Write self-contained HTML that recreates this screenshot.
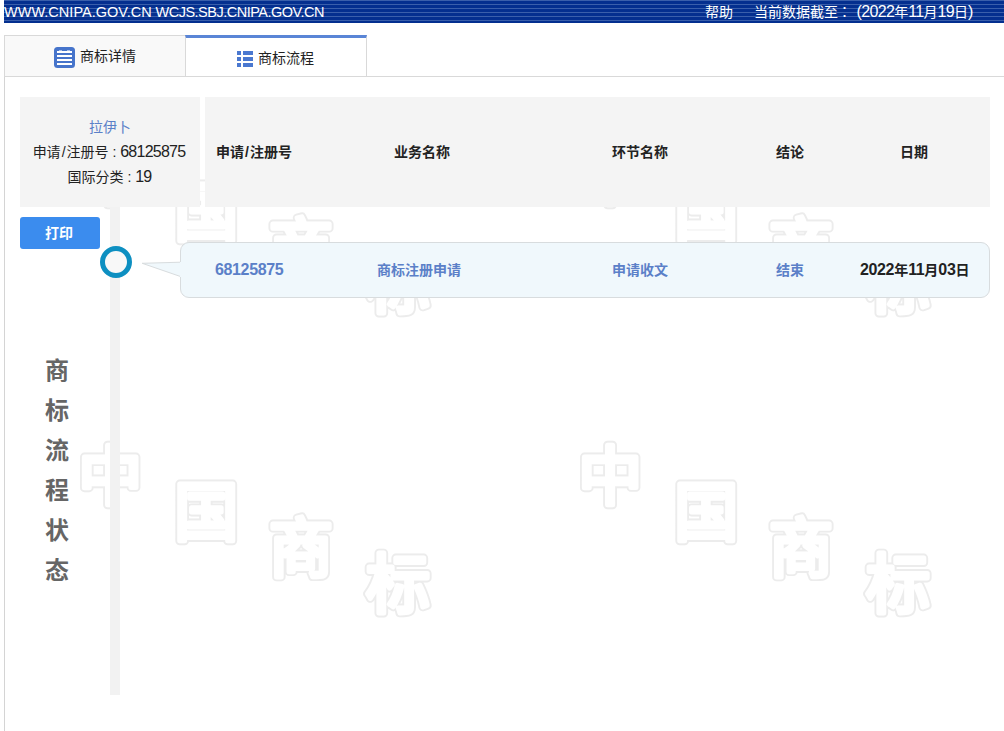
<!DOCTYPE html>
<html lang="zh-CN">
<head>
<meta charset="utf-8">
<title>商标流程</title>
<style>
html,body{margin:0;padding:0;background:#fff;}
body{width:1004px;height:731px;position:relative;overflow:hidden;
  font-family:"Liberation Sans","Noto Sans CJK SC",sans-serif;font-size:14px;color:#222;}
.abs{position:absolute;}
.n{font-size:16px;letter-spacing:-0.36px;}
.m{font-size:16px;letter-spacing:-0.75px;}
.sl{margin:0 1px;}
#hdr .m{letter-spacing:-.65px;}
#hdr{left:4px;top:0;width:1000px;height:23px;
  background:repeating-linear-gradient(to bottom,#3a5fab 0,#3a5fab 1px,#042f8f 1px,#042f8f 4px);}
#hdr span{position:absolute;top:0;height:23px;line-height:23px;color:#fff;font-size:14px;white-space:nowrap;}
#wm{left:5px;top:77px;width:999px;height:654px;}
#lborder{left:4px;top:35px;width:1px;height:696px;background:#d4d4d4;}
#hline{left:4px;top:76px;width:1000px;height:1px;background:#d9d9d9;}
#tab1{left:4px;top:35px;width:181px;height:41px;background:#f9f9f9;border:1px solid #d9d9d9;border-bottom:none;box-sizing:content-box;}
#tab2{left:185px;top:35px;width:180px;height:38px;background:#fff;border-top:3px solid #5a85d6;border-left:1px solid #d9d9d9;border-right:1px solid #d9d9d9;}
.tabtxt{position:absolute;white-space:nowrap;font-size:14px;line-height:20px;color:#222;}
#info{left:20px;top:97px;width:180px;height:110px;background:#f4f4f4;}
#info div{position:absolute;left:0;width:180px;text-align:center;white-space:nowrap;line-height:20px;font-size:14px;}
#thead{left:205px;top:97px;width:785px;height:110px;background:#f4f4f4;}
.th{position:absolute;top:142px;line-height:20px;font-weight:bold;white-space:nowrap;font-size:14px;color:#222;}
#print{left:20px;top:217px;width:78px;padding-right:2px;height:32px;background:#3b8cee;border-radius:3px;color:#fff;font-weight:bold;text-align:center;line-height:32px;font-size:14px;}
#vline{left:110px;top:207px;width:10px;height:488px;background:#f2f2f2;}
#dot{left:100px;top:246px;width:22px;height:22px;border:5px solid #0d8fc1;border-radius:50%;background:#f8f8f8;}
#bubble{left:180px;top:242px;width:808px;height:54px;border:1px solid #d8dcde;border-radius:9px;background:#f0f8fc;}
.td{position:absolute;top:260px;line-height:20px;font-weight:bold;white-space:nowrap;font-size:14px;color:#5b80c8;}
#vt{left:44px;top:351px;width:26px;text-align:center;font-size:24px;font-weight:bold;color:#666;line-height:40px;}
</style>
</head>
<body>
<div id="hdr" class="abs">
  <span style="left:0;font-size:14.5px;letter-spacing:0.02px;line-height:24px">WWW.CNIPA.GOV.CN <i style="font-style:normal;letter-spacing:-0.5px;margin-left:-0.3px">WCJS.SBJ.CNIPA.GOV.CN</i></span>
  <span style="left:701px;top:1px">帮助</span>
  <span style="left:750px;top:0px">当前数据截至<i style="font-style:normal;position:relative;left:3px;top:-1px">：</i><b class="m" style="font-weight:normal;margin-left:4.5px">(2022</b>年<b class="m" style="font-weight:normal">11</b>月<b class="m" style="font-weight:normal">19</b>日<b class="m" style="font-weight:normal">)</b></span>
</div>

<svg id="wm" class="abs" width="999" height="654" viewBox="5 77 999 654">
<g font-family="'Liberation Sans','Noto Sans CJK SC',sans-serif" font-weight="400" font-size="64" text-anchor="middle" dominant-baseline="central" stroke-linejoin="round" stroke-linecap="round">
<g fill="#ededed" stroke="#ececec" stroke-width="8.8"><text x="110.2" y="177.0">中</text><text x="206.2" y="213.2">国</text><text x="301.0" y="248.6">商</text><text x="398.0" y="284.7">标</text><text x="110.2" y="477.0">中</text><text x="206.2" y="513.2">国</text><text x="301.0" y="548.6">商</text><text x="398.0" y="584.7">标</text><text x="610.2" y="177.0">中</text><text x="706.2" y="213.2">国</text><text x="801.0" y="248.6">商</text><text x="898.0" y="284.7">标</text><text x="610.2" y="477.0">中</text><text x="706.2" y="513.2">国</text><text x="801.0" y="548.6">商</text><text x="898.0" y="584.7">标</text></g>
<g fill="#fff" stroke="#fff" stroke-width="5"><text x="110.2" y="177.0">中</text><text x="206.2" y="213.2">国</text><text x="301.0" y="248.6">商</text><text x="398.0" y="284.7">标</text><text x="110.2" y="477.0">中</text><text x="206.2" y="513.2">国</text><text x="301.0" y="548.6">商</text><text x="398.0" y="584.7">标</text><text x="610.2" y="177.0">中</text><text x="706.2" y="213.2">国</text><text x="801.0" y="248.6">商</text><text x="898.0" y="284.7">标</text><text x="610.2" y="477.0">中</text><text x="706.2" y="513.2">国</text><text x="801.0" y="548.6">商</text><text x="898.0" y="584.7">标</text></g>
</g>
</svg>

<div id="lborder" class="abs"></div>
<div id="tab1" class="abs"></div>
<div id="tab2" class="abs"></div>
<div id="hline" class="abs"></div>

<svg class="abs" style="left:54px;top:47px" width="21" height="21" viewBox="0 0 21 21">
  <rect x="0" y="0" width="21" height="21" rx="3.5" fill="#4674cb"/>
  <rect x="5" y="3" width="3" height="1" fill="#fff" opacity=".55"/><rect x="13" y="3" width="3" height="1" fill="#fff" opacity=".55"/>
  <rect x="3" y="4" width="15" height="2" fill="#fff"/>
  <rect x="3" y="8" width="15" height="2" fill="#fff"/>
  <rect x="3" y="12" width="15" height="2" fill="#fff"/>
  <rect x="3" y="16" width="15" height="2" fill="#fff"/>
</svg>
<div class="tabtxt" style="left:80px;top:46px">商标详情</div>

<svg class="abs" style="left:237px;top:51px" width="16" height="16" viewBox="0 0 16 16">
  <g fill="#4a78d0">
  <rect x="0" y="0" width="4" height="4"/><rect x="6" y="0" width="10" height="4"/>
  <rect x="0" y="6" width="4" height="4"/><rect x="6" y="6" width="10" height="4"/>
  <rect x="0" y="12" width="4" height="4"/><rect x="6" y="12" width="10" height="4"/>
  </g>
</svg>
<div class="tabtxt" style="left:258px;top:48px">商标流程</div>

<div id="info" class="abs">
  <div style="top:20px;color:#5b80c8">拉伊卜</div>
  <div style="top:45px;left:-1px">申请<span class="sl">/</span>注册号 : <span class="m">68125875</span></div>
  <div style="top:70px;left:-0.5px">国际分类 : <span class="m">19</span></div>
</div>
<div id="thead" class="abs"></div>
<div class="th" style="left:216px">申请<span class="sl">/</span>注册号</div>
<div class="th" style="left:394px">业务名称</div>
<div class="th" style="left:612px">环节名称</div>
<div class="th" style="left:776px">结论</div>
<div class="th" style="left:900px">日期</div>

<div id="print" class="abs">打印</div>
<div id="vline" class="abs"></div>
<div id="dot" class="abs"></div>

<svg class="abs" style="left:140px;top:258px" width="42" height="22" viewBox="140 258 42 22">
  <path d="M181 262.2 L142.2 263.3 L181 276.7 Z" fill="#f0f8fc" stroke="#d8dcde" stroke-width="1"/>
</svg>
<div id="bubble" class="abs"></div>
<div class="abs" style="left:180px;top:262px;width:2px;height:15px;background:#f0f8fc"></div>

<div class="td" style="left:215px"><span class="n">68125875</span></div>
<div class="td" style="left:377px">商标注册申请</div>
<div class="td" style="left:612px">申请收文</div>
<div class="td" style="left:776px">结束</div>
<div class="td" style="left:860px;color:#222"><span class="n">2022</span>年<span class="n">11</span>月<span class="n">03</span>日</div>

<div id="vt" class="abs">商<br>标<br>流<br>程<br>状<br>态</div>
</body>
</html>
